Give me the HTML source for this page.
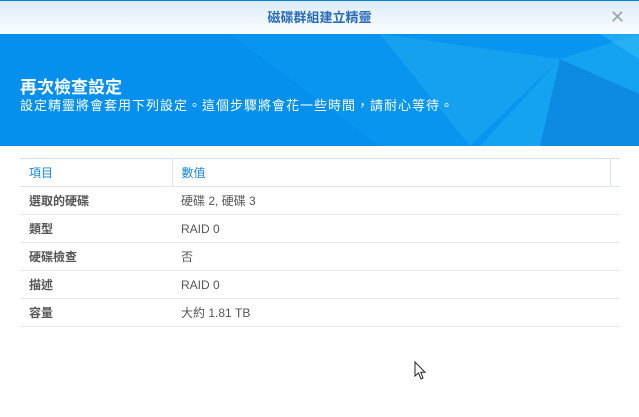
<!DOCTYPE html>
<html><head><meta charset="utf-8"><style>
*{margin:0;padding:0;box-sizing:border-box}
body{width:639px;height:417px;overflow:hidden;background:#fff;font-family:"Liberation Sans","Noto Sans CJK TC",sans-serif;position:relative}
.top{position:absolute;left:0;top:0;width:639px;height:34px;border-top:1px solid #0a7fd8;background:linear-gradient(#dcecf9,#fbfdff);text-align:center;font-size:13px;font-weight:bold;color:#2a6bb5;line-height:33px}
.x{position:absolute;right:14px;top:0;font-size:18px;color:#9aa4ad;font-weight:normal}
.ban{position:absolute;left:0;top:34px;width:639px;height:112px;background:#0590ee;overflow:hidden}
.ban h1{position:absolute;left:20px;top:39px;font-size:17px;color:#fff;font-weight:bold}
.ban p{position:absolute;left:20px;top:61px;font-size:13px;color:#fff;letter-spacing:1px}
table{position:absolute;left:20px;top:158px;width:600px;border-collapse:collapse;font-size:12px}
td{height:28px;border-bottom:1px solid #e6e9ec;padding-left:9px}
tr.h td{border-top:1px solid #d4e1ee;border-bottom:1px solid #dde6ee;color:#1a87d6;height:28px}
td.a{width:152px;font-weight:bold;color:#555}
td.b{color:#555}
tr.h td.a{font-weight:normal;color:#1a87d6;border-right:1px solid #dde6ee}
</style></head><body>
<div class="top">磁碟群組建立精靈<span class="x">✕</span></div>
<div class="ban">
<svg width="639" height="112" style="position:absolute;left:0;top:0">
<polygon points="230,0 639,0 639,112 380,112" fill="#0a9af2" opacity=".5"/>
<polygon points="560,25 639,0 639,112 480,112" fill="#1fb2f2" opacity=".5"/>
<polygon points="380,0 560,25 470,112" fill="#34b6f0" opacity=".35"/>
<polygon points="560,25 639,60 639,112 540,112" fill="#0874d4" opacity=".5"/>
<polygon points="600,0 639,0 639,25" fill="#38c0f5" opacity=".5"/>
</svg>
<h1>再次檢查設定</h1>
<p>設定精靈將會套用下列設定。這個步驟將會花一些時間，請耐心等待。</p>
</div>
<table>
<tr class="h"><td class="a">項目</td><td class="b" style="color:#1a87d6;border-right:1px solid #dde6ee">數值</td><td style="width:10px;padding:0"></td></tr>
<tr><td class="a">選取的硬碟</td><td class="b" colspan="2">硬碟 2, 硬碟 3</td></tr>
<tr><td class="a">類型</td><td class="b" colspan="2">RAID 0</td></tr>
<tr><td class="a">硬碟檢查</td><td class="b" colspan="2">否</td></tr>
<tr><td class="a">描述</td><td class="b" colspan="2">RAID 0</td></tr>
<tr><td class="a">容量</td><td class="b" colspan="2">大約 1.81 TB</td></tr>
</table>
<svg width="14" height="20" style="position:absolute;left:414px;top:361px"><path d="M1,1 L1,15 L4.5,12 L7,18 L9,17 L6.8,11.3 L11,11.3 Z" fill="#fff" stroke="#223" stroke-width="1"/></svg>
</body></html>
